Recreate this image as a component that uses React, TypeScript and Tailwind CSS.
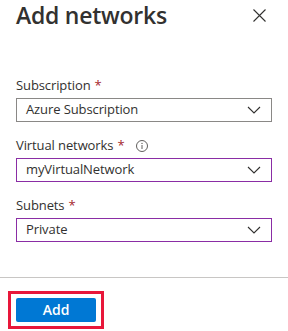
const fields = [
  { label: "Subscription", value: "Azure Subscription", info: false, active: false },
  { label: "Virtual networks", value: "myVirtualNetwork", info: true, active: true },
  { label: "Subnets", value: "Private", info: false, active: true },
];

function Chevron() {
  return (
    <svg width="14" height="8" viewBox="0 0 14 8" fill="none">
      <path d="M1 1l6 6 6-6" stroke="#323130" strokeWidth="1.1" />
    </svg>
  );
}

function CloseIcon() {
  return (
    <svg width="13" height="13" viewBox="0 0 13 13" fill="none">
      <path d="M0.5 0.5l12 12M12.5 0.5l-12 12" stroke="#323130" strokeWidth="1.1" />
    </svg>
  );
}

function InfoIcon() {
  return (
    <svg width="12" height="12" viewBox="0 0 12 12" fill="none">
      <circle cx="6" cy="6" r="5.5" stroke="#605e5c" strokeWidth="1" />
      <path d="M6 5v4" stroke="#605e5c" strokeWidth="1" />
      <circle cx="6" cy="3.4" r="0.7" fill="#605e5c" />
    </svg>
  );
}

export default function App() {
  return (
    <div
      className="w-[288px] h-[331px] bg-white flex flex-col overflow-hidden text-[#323130]"
      style={{ fontFamily: '"Open Sans", "Noto Sans", sans-serif' }}
    >
      <div className="flex items-start justify-between pl-4 pr-[22px]">
        <h1 className="text-[23px] leading-[30px] font-semibold tracking-[-0.25px]">
          Add networks
        </h1>
        <span className="mt-[9px] flex">
          <CloseIcon />
        </span>
      </div>

      <div className="flex flex-col gap-[14px] px-4 mt-[46px]">
        {fields.map((f) => (
          <div key={f.label} className="flex flex-col gap-[2px]">
            <div className="flex items-center h-[20px] text-[13px] tracking-[-0.1px]">
              <span>{f.label}</span>
              <span className="text-[#a4262c] ml-[4px]">*</span>
              {f.info && (
                <span className="ml-[12px] flex">
                  <InfoIcon />
                </span>
              )}
            </div>
            <div
              className={`flex items-center justify-between h-[24px] pl-[9px] pr-[10px] border text-[13px] tracking-[-0.1px] ${
                f.active ? "border-[#8a2da5]" : "border-[#8a8886]"
              }`}
            >
              <span>{f.value}</span>
              <Chevron />
            </div>
          </div>
        ))}
      </div>

      <div className="mt-[35px] border-t border-[#c8c6c4]" />

      <div className="pl-2 mt-[13px]">
        <div className="inline-flex border-[3px] border-[#e8173a] px-[5px] py-[4px]">
          <button className="w-[80px] h-[24px] bg-[#0078d4] text-white text-[14px] font-semibold rounded-[2px] leading-none">
            Add
          </button>
        </div>
      </div>
    </div>
  );
}
